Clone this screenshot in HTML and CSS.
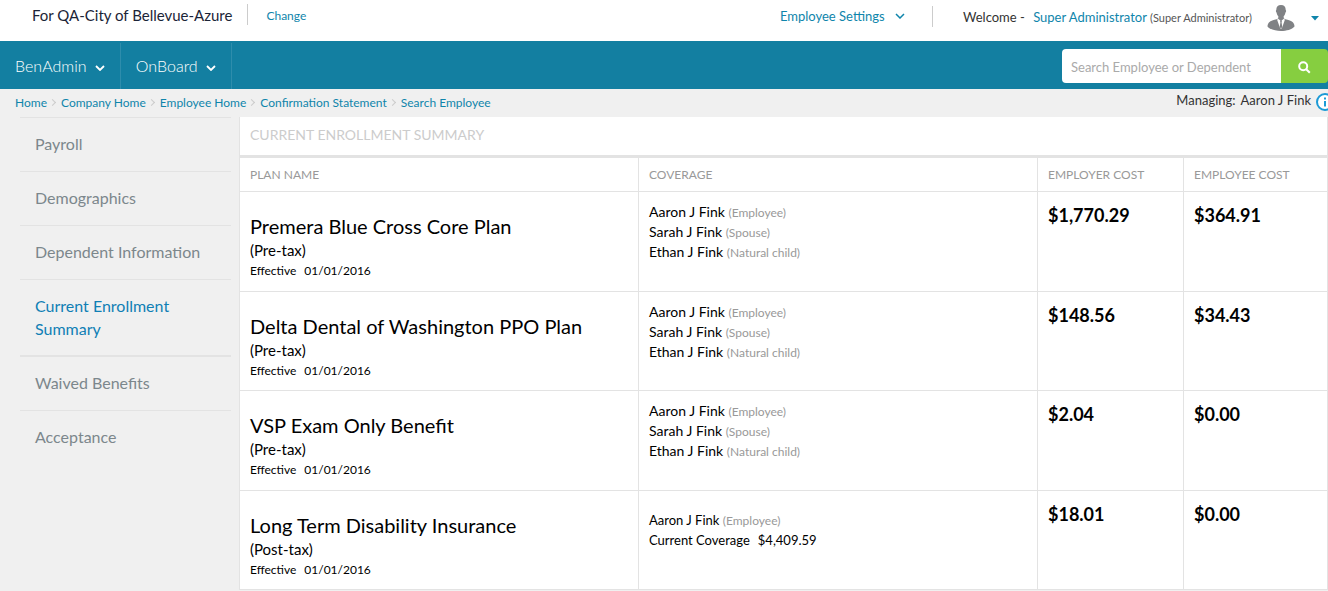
FILE: index.html
```html
<!doctype html>
<html lang="en">
	<head>
		<meta charset="utf-8" />
		<meta name="viewport" content="width=device-width, initial-scale=1" />
		<title>Current Enrollment Summary</title>
		<link rel="stylesheet" href="styles.css">
	</head>
	<body>
		<header class="topbar">
			<span class="company">For QA-City of Bellevue-Azure</span>
			<a class="change" href="#">Change</a>
			<div class="account">
				<a class="settings" href="#">Employee Settings
					<svg class="chevron" width="10" height="6" viewBox="0 0 10 6"><path d="M1 1l4 4 4-4" /></svg>
				</a>
				<span class="welcome">Welcome - <a href="#">Super Administrator</a> <small>(Super Administrator)</small></span>
				<button class="avatar" aria-label="Account menu">
					<svg width="28" height="26" viewBox="0 0 28 26">
						<path fill="#808285" d="M14 0c3.200 0 4.800 2 4.700 5 .6.300.6 1.900-.2 2.600-.4 2-1.200 3.200-1.900 3.900l.3 2c1.500 1 5.500 1.500 8 2.900 1.800 1 2.600 3 2.600 5.100C25 24.500 19.500 26 14 26S3 24.500.5 21.500c0-2.100.8-4.100 2.600-5.100 2.500-1.400 6.500-1.900 8-2.900l.3-2c-.7-.7-1.500-1.900-1.900-3.900-.8-.7-.8-2.300-.2-2.600C9.200 2 10.800 0 14 0z" />
						<path fill="#fff" d="M10.800 13.500L14 16l3.200-2.500.6 1.500-3 8.500h-1.600l-3-8.500z" />
						<path fill="#808285" d="M13 15.500h2l-.4 2 .7 4.500-1.300 1.500-1.300-1.500.7-4.500z" />
					</svg>
					<svg width="8" height="5" viewBox="0 0 8 5"><path fill="#0f85ab" d="M0 0h8L4 4.500z" /></svg>
				</button>
			</div>
		</header>

		<nav class="mainnav">
			<a href="#">BenAdmin <svg class="chevron" width="10" height="6" viewBox="0 0 10 6"><path d="M1 1l4 4 4-4" /></svg></a>
			<a href="#">OnBoard <svg class="chevron" width="10" height="6" viewBox="0 0 10 6"><path d="M1 1l4 4 4-4" /></svg></a>
			<form class="search">
				<input type="text" placeholder="Search Employee or Dependent" aria-label="Search Employee or Dependent" />
				<button type="button" aria-label="Search">
					<svg width="13" height="13" viewBox="0 0 13 13"><circle cx="5.200" cy="5.200" r="4" /><path d="M8.200 8.200l3.600 3.600" /></svg>
				</button>
			</form>
		</nav>

		<div class="subbar">
			<nav class="breadcrumb">
				<a href="#">Home</a>
				<a href="#">Company Home</a>
				<a href="#">Employee Home</a>
				<a href="#">Confirmation Statement</a>
				<a href="#">Search Employee</a>
			</nav>
			<div class="managing">
				<span>Managing:</span>
				<span>Aaron J Fink</span>
				<svg width="18" height="18" viewBox="0 0 18 18"><circle cx="9" cy="9" r="8" fill="#fff" stroke="#1c9ad6" stroke-width="2" /><path d="M9 8v5.500M9 4.500v2" stroke="#1c9ad6" stroke-width="2" /></svg>
			</div>
		</div>

		<div class="content">
			<nav class="sidebar">
				<a href="#">Payroll</a>
				<a href="#">Demographics</a>
				<a href="#">Dependent Information</a>
				<a href="#" class="active">Current Enrollment Summary</a>
				<a href="#">Waived Benefits</a>
				<a href="#">Acceptance</a>
			</nav>

			<main class="panel">
				<h1>Current Enrollment Summary</h1>
				<table>
					<thead>
						<tr>
							<th>Plan Name</th>
							<th>Coverage</th>
							<th class="cost">Employer Cost</th>
							<th class="cost">Employee Cost</th>
						</tr>
					</thead>
					<tbody>
						<tr>
							<td class="plan">
								<h2>Premera Blue Cross Core Plan</h2>
								<p>(Pre-tax)</p>
								<p class="effective"><span>Effective</span><span>01/01/2016</span></p>
							</td>
							<td class="people">
								<p>Aaron J Fink <small>(Employee)</small></p>
								<p>Sarah J Fink <small>(Spouse)</small></p>
								<p>Ethan J Fink <small>(Natural child)</small></p>
							</td>
							<td class="amount">$1,770.29</td>
							<td class="amount">$364.91</td>
						</tr>
						<tr>
							<td class="plan">
								<h2>Delta Dental of Washington PPO Plan</h2>
								<p>(Pre-tax)</p>
								<p class="effective"><span>Effective</span><span>01/01/2016</span></p>
							</td>
							<td class="people">
								<p>Aaron J Fink <small>(Employee)</small></p>
								<p>Sarah J Fink <small>(Spouse)</small></p>
								<p>Ethan J Fink <small>(Natural child)</small></p>
							</td>
							<td class="amount">$148.56</td>
							<td class="amount">$34.43</td>
						</tr>
						<tr>
							<td class="plan">
								<h2>VSP Exam Only Benefit</h2>
								<p>(Pre-tax)</p>
								<p class="effective"><span>Effective</span><span>01/01/2016</span></p>
							</td>
							<td class="people">
								<p>Aaron J Fink <small>(Employee)</small></p>
								<p>Sarah J Fink <small>(Spouse)</small></p>
								<p>Ethan J Fink <small>(Natural child)</small></p>
							</td>
							<td class="amount">$2.04</td>
							<td class="amount">$0.00</td>
						</tr>
						<tr>
							<td class="plan">
								<h2>Long Term Disability Insurance</h2>
								<p>(Post-tax)</p>
								<p class="effective"><span>Effective</span><span>01/01/2016</span></p>
							</td>
							<td class="people volume">
								<p>Aaron J Fink <small>(Employee)</small></p>
								<p class="current"><span>Current Coverage</span><span>$4,409.59</span></p>
							</td>
							<td class="amount">$18.01</td>
							<td class="amount">$0.00</td>
						</tr>
					</tbody>
				</table>
			</main>
		</div>
	</body>
</html>
```
FILE: styles.css
```css
* {
	box-sizing: border-box;
}
body {
	margin: 0;
	background-color: #f0f0f0;
	color: #000;
	font-family: Lato, sans-serif;
	font-size: 13px;
	overflow-x: hidden;
}
a {
	color: #0f85ab;
	text-decoration: none;
}
h1, h2, p {
	margin: 0;
	font-weight: normal;
}
small {
	font-size: 12px;
	line-height: 1;
}
button {
	border: 0;
	padding: 0;
	background: none;
	cursor: pointer;
}
.chevron {
	fill: none;
	stroke: currentColor;
	stroke-width: 1.5;
}

/* top bar */
.topbar {
	display: flex;
	align-items: flex-start;
	height: 41px;
	padding: 4px 9px 0 32px;
	background-color: #fff;
	white-space: nowrap;
}
.company {
	color: #1b2437;
	font-size: 15px;
	line-height: 22px;
}
.change {
	margin-left: 15px;
	padding: 3px 0 0 18px;
	border-left: 1px solid #ccc;
	font-size: 12px;
	line-height: 18px;
}
.account {
	display: flex;
	align-items: flex-start;
	margin-left: auto;
	line-height: 24px;
}
.settings {
	padding-right: 27px;
}
.settings .chevron {
	margin: 0 0 2px 7px;
}
.welcome {
	margin-top: 2px;
	padding: 1px 0 0 30px;
	border-left: 1px solid #ccc;
	color: #333;
	line-height: 20px;
}
.welcome a {
	margin-left: 5px;
}
.welcome small {
	color: #555;
	font-size: 11px;
}
.avatar {
	display: flex;
	align-items: center;
	gap: 16px;
	margin-left: 15px;
	padding-top: 1px;
}

/* main navigation */
.mainnav {
	display: flex;
	height: 48px;
	background-color: #137fa1;
}
.mainnav > a {
	margin-top: 2px;
	padding: 0 15px;
	border-right: 1px solid #2e8dac;
	color: #fff;
	font-size: 16px;
	font-weight: 300;
	line-height: 45px;
}
.mainnav .chevron {
	margin: 0 0 1px 4px;
	stroke-width: 1.8;
}
.search {
	display: flex;
	width: 266px;
	height: 34px;
	margin: 8px 0 0 auto;
}
.search input {
	flex: 1;
	min-width: 0;
	border: 0;
	border-radius: 4px 0 0 4px;
	padding: 2px 9px 0;
	font: inherit;
}
.search input::placeholder {
	color: #aaa;
}
.search button {
	width: 47px;
	background-color: #86ce40;
	border-radius: 0 4px 4px 0;
}
.search svg {
	display: block;
	margin: 2px auto 0;
	fill: none;
	stroke: #fff;
	stroke-width: 2;
}

/* breadcrumb row */
.subbar {
	display: flex;
	justify-content: space-between;
	height: 28px;
	padding-left: 15px;
	white-space: nowrap;
}
.breadcrumb {
	display: flex;
	font-size: 12px;
	line-height: 28px;
}
.breadcrumb a + a::before {
	content: "";
	display: inline-block;
	width: 4px;
	height: 4px;
	margin: 0 6px 2px 3px;
	border: solid #ccc;
	border-width: 1px 1px 0 0;
	transform: rotate(45deg);
}
.managing {
	display: flex;
	gap: 5px;
	margin-right: -6px;
	color: #333;
	line-height: 23px;
}
.managing svg {
	margin-top: 4px;
}

/* sidebar */
.content {
	display: flex;
}
.sidebar {
	flex: none;
	width: 239px;
	padding: 0 8px 0 20px;
}
.sidebar a {
	display: block;
	padding: 14px 15px 16px;
	border-top: 1px solid #e3e3e3;
	color: #7c878c;
	font-size: 16px;
	line-height: 23px;
}
.sidebar a.active {
	border-bottom: 1px solid #e3e3e3;
	padding-bottom: 15px;
	color: #0f7fb5;
}

/* enrollment table */
.panel {
	flex: 1;
	min-width: 0;
	border: solid #e3e3e3;
	border-width: 0 1px;
	background-color: #fff;
}
.panel h1 {
	padding: 0 10px 2px;
	border-bottom: 3px solid #e3e3e3;
	color: #ccc;
	font-size: 14px;
	line-height: 36px;
	text-transform: uppercase;
}
table {
	width: 100%;
	border-spacing: 0;
	table-layout: fixed;
}
th, td {
	padding: 0 10px;
	border-bottom: 1px solid #e3e3e3;
	border-right: 1px solid #e3e3e3;
	text-align: left;
	vertical-align: top;
}
th:last-child, td:last-child {
	border-right: 0;
}
th {
	height: 34px;
	color: #999;
	font-size: 12px;
	font-weight: normal;
	line-height: 33px;
	text-transform: uppercase;
}
th.cost {
	width: 146px;
}
th.cost:last-child {
	width: 143px;
}
tbody tr {
	height: 100px;
}
tbody tr:nth-child(even) {
	height: 99px;
}
.plan {
	padding-top: 21px;
}
.plan h2 {
	font-size: 20px;
	line-height: 26px;
}
.plan p {
	font-size: 15px;
	line-height: 23px;
}
.plan .effective {
	display: flex;
	gap: 8px;
	font-size: 12px;
	line-height: 18px;
}
.people {
	padding-top: 10px;
	font-size: 14px;
	line-height: 20px;
}
.people.volume {
	padding-top: 19px;
	font-size: 13px;
}
.people small {
	color: #999;
}
.current {
	display: flex;
	gap: 8px;
}
.amount {
	padding-top: 11px;
	font-size: 18px;
	font-weight: bold;
	line-height: 24px;
}
```
